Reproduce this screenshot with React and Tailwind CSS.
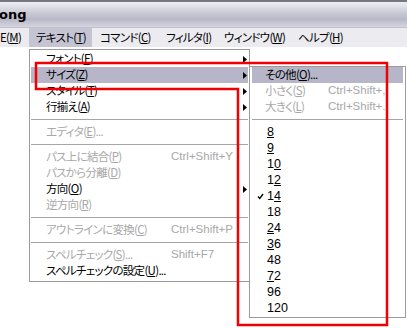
import React from "react";

const jp = { fontFamily: "'Noto Sans CJK JP', 'Noto Sans', sans-serif" };

function U({ children }) {
  return <span className="underline underline-offset-[1px]">{children}</span>;
}

function Arrow() {
  return (
    <svg width="4" height="7" viewBox="0 0 4 7" className="ml-auto mr-[1px]">
      <path d="M0 0 L4 3.5 L0 7 Z" fill="#000" />
    </svg>
  );
}

function Check() {
  return (
    <svg width="7" height="7" viewBox="0 0 7 7" className="absolute left-[5px] top-[5px]">
      <path d="M1 3.5 L2.8 5.5 L6 1" stroke="#000" strokeWidth="1.3" fill="none" />
    </svg>
  );
}

function Item({ label, mn, after = "", shortcut, arrow, disabled, active, col = 125, pl = 15 }) {
  return (
    <div
      className={`relative h-[16px] flex items-center text-[11.5px] tracking-[-0.7px] leading-none ${
        active ? "bg-[#b6b6c8]" : ""
      } ${disabled ? "text-[#a8a8a8]" : "text-black"}`}
      style={{ paddingLeft: pl }}
    >
      <span className="whitespace-nowrap shrink-0" style={{ width: col }}>
        {label}
        {mn && (
          <>
            (<U>{mn}</U>)
          </>
        )}
        {after}
      </span>
      {shortcut && (
        <span className="whitespace-nowrap text-[11.5px] tracking-normal" style={{ fontFamily: "'Liberation Sans', sans-serif" }}>
          {shortcut}
        </span>
      )}
      {arrow && <Arrow />}
    </div>
  );
}

function Sep() {
  return (
    <div className="h-[9px] flex items-center">
      <div className="h-px w-full bg-[#a6a6a6]" />
    </div>
  );
}

function Size({ pre = "", u = "", post = "", checked }) {
  return (
    <div className="relative h-[16px] flex items-center pl-[15px] text-[12.5px] leading-none text-black" style={{ fontFamily: "'Liberation Sans', sans-serif" }}>
      {checked && <Check />}
      <span>
        {pre}
        {u && <U>{u}</U>}
        {post}
      </span>
    </div>
  );
}

export default function App() {
  const menuBar = [
    { t: "E", m: "M", x: "w-[29px] pl-0" },
    { t: "テキスト", m: "T", x: "w-[63px] pl-[7px] bg-[#c4c4d2]" },
    { t: "コマンド", m: "C", x: "w-[74px] pl-[8px]" },
    { t: "フィルタ", m: "I", x: "w-[58px]" },
    { t: "ウィンドウ", m: "W", x: "w-[74px]" },
    { t: "ヘルプ", m: "H", x: "" },
  ];

  return (
    <div className="relative w-[407px] h-[328px] overflow-hidden bg-white [font-feature-settings:'palt']" style={jp}>
      {/* title bar */}
      <div className="h-[2px] bg-[#76767e]" />
      <div className="h-[25px] flex items-center bg-[linear-gradient(to_bottom,#eeeef2,#c9c9d5_45%,#b8b8c8_70%,#d6d6e0)]">
        <span className="text-[13px] font-bold text-black -ml-[1px]" style={{ fontFamily: "'DejaVu Sans', sans-serif" }}>
          ong
        </span>
      </div>
      {/* menu bar */}
      <div className="h-[20px] flex items-stretch bg-[#ebebf0] border-t border-[#c2c2cc]">
        {menuBar.map((m) => (
          <div key={m.t} className={`shrink-0 flex items-center text-[11.5px] tracking-[-0.7px] leading-none text-black whitespace-nowrap ${m.x}`}>
            {m.t}(<U>{m.m}</U>)
          </div>
        ))}
      </div>

      {/* text menu */}
      <div className="absolute left-[29px] top-[49px] w-[221px] h-[233px] bg-white border border-[#9c9c9c] px-[1px] pt-[1px]">
        <Item label="フォント" mn="F" arrow />
        <Item label="サイズ" mn="Z" arrow active />
        <Item label="スタイル" mn="T" arrow />
        <Item label="行揃え" mn="A" arrow />
        <Sep />
        <Item label="エディタ" mn="E" after="..." disabled />
        <Sep />
        <Item label="パス上に結合" mn="P" shortcut="Ctrl+Shift+Y" disabled />
        <Item label="パスから分離" mn="D" disabled />
        <Item label="方向" mn="O" arrow />
        <Item label="逆方向" mn="R" disabled />
        <Sep />
        <Item label="アウトラインに変換" mn="C" shortcut="Ctrl+Shift+P" disabled />
        <Sep />
        <Item label="スペルチェック" mn="S" after="..." shortcut="Shift+F7" disabled />
        <Item label="スペルチェックの設定" mn="U" after="..." />
      </div>

      {/* size submenu */}
      <div className="absolute left-[249px] top-[66px] w-[157px] h-[252px] bg-white border border-[#9c9c9c] px-[2px]">
        <Item label="その他" mn="O" after="..." active col={63} pl={13} />
        <Item label="小さく" mn="S" shortcut="Ctrl+Shift+," disabled col={63} pl={13} />
        <Item label="大きく" mn="L" shortcut="Ctrl+Shift+." disabled col={63} pl={13} />
        <Sep />
        <Size u="8" />
        <Size u="9" />
        <Size pre="1" u="0" />
        <Size pre="1" u="2" />
        <Size pre="1" u="4" checked />
        <Size pre="18" />
        <Size u="2" post="4" />
        <Size u="3" post="6" />
        <Size pre="48" />
        <Size u="7" post="2" />
        <Size pre="96" />
        <Size pre="120" />
      </div>

      {/* red annotation outline */}
      <svg className="absolute inset-0 pointer-events-none" width="407" height="328">
        <path
          d="M36 63 L387 63 L387 325 L238 325 L238 89 L36 89 Z"
          fill="none"
          stroke="#f00000"
          strokeWidth="2.5"
        />
      </svg>
    </div>
  );
}
